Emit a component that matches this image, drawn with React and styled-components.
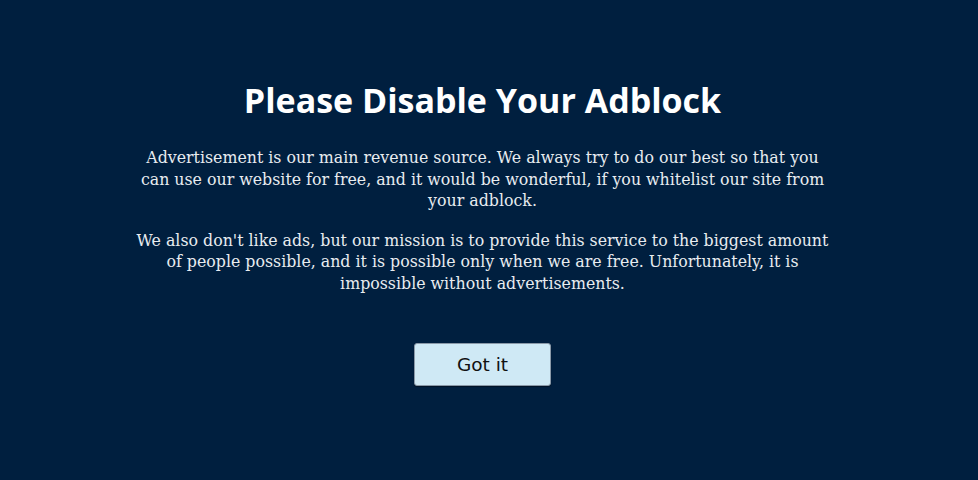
import styled, { createGlobalStyle } from "styled-components";

const GlobalStyle = createGlobalStyle`
  html, body {
    margin: 0;
    padding: 0;
    background: #001f3f;
  }
`;

export default function App() {
    return (
        <>
            <GlobalStyle />
            <Page>
                <Box>
                    <Title>Please Disable Your Adblock</Title>
                    <Text>
                        Advertisement is our main revenue source. We always try to do our best so that you<br />
                        can use our website for free, and it would be wonderful, if you whitelist our site from<br />
                        your adblock.
                    </Text>
                    <Text>
                        We also don't like ads, but our mission is to provide this service to the biggest amount<br />
                        of people possible, and it is possible only when we are free. Unfortunately, it is<br />
                        impossible without advertisements.
                    </Text>
                    <Button>Got it</Button>
                </Box>
            </Page>
        </>
    );
}

const Page = styled.div`
    width: 100%;
    height: 480px;
    box-sizing: border-box;
    padding-right: 13px;
    background-color: #001f3f;
    display: flex;
    justify-content: center;
`;

const Box = styled.div`
    width: 740px;
    padding-top: 80px;
    display: flex;
    flex-direction: column;
    align-items: center;
    text-align: center;
`;

const Title = styled.h1`
    margin: 0 0 27px;
    font-family: "Open Sans", "Noto Sans", sans-serif;
    font-weight: 700;
    font-size: 34px;
    line-height: 40px;
    color: #ffffff;
`;

const Text = styled.p`
    margin: 0 0 18px;
    font-family: "DejaVu Serif", "Liberation Serif", serif;
    font-size: 15.8px;
    line-height: 21.5px;
    color: #e8ecf0;
    white-space: nowrap;
`;

const Button = styled.button`
    margin-top: 31px;
    width: 137px;
    height: 43px;
    background-color: #cfe9f5;
    border: 1px solid #8a99a8;
    border-radius: 3px;
    box-shadow: 0 1px 1px rgba(0, 0, 0, 0.4);
    font-family: "DejaVu Sans", "Liberation Sans", sans-serif;
    font-size: 18.5px;
    color: #111;
    cursor: pointer;
`;
